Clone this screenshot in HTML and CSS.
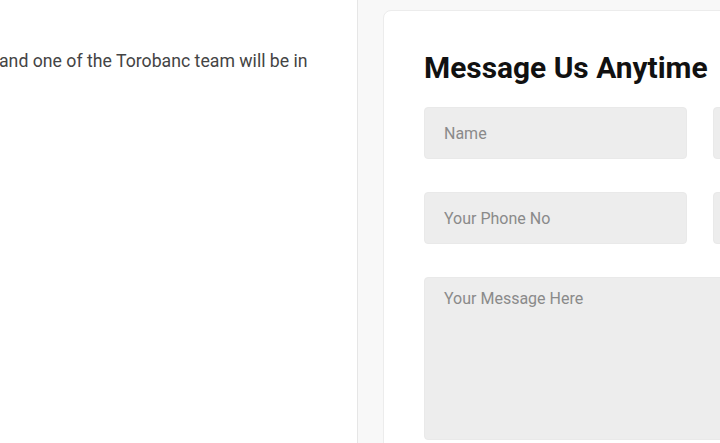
FILE: index.html
```html
<!DOCTYPE html>
<html>
<head>
<meta charset="utf-8">
<link rel="stylesheet" href="styles.css">
</head>
<body>
<div class="page">
  <div class="info">
    <p class="lead">and one of the Torobanc team will be in</p>
  </div>
  <div class="side">
    <div class="card">
      <h2 class="title">Message Us Anytime</h2>
      <form class="form">
        <div class="row">
          <input class="field" type="text" placeholder="Name">
          <input class="field" type="text" placeholder="Email">
        </div>
        <div class="row">
          <input class="field" type="text" placeholder="Your Phone No">
          <input class="field" type="text" placeholder="Subject">
        </div>
        <textarea class="field area" placeholder="Your Message Here"></textarea>
      </form>
    </div>
  </div>
</div>
</body>
</html>
```

FILE: styles.css
```css
html, body {
  margin: 0;
  padding: 0;
  background: #fff;
  overflow: hidden;
}
body {
  font-family: Roboto, "Liberation Sans", sans-serif;
  width: 720px;
  height: 443px;
}
.page {
  display: flex;
  height: 443px;
  overflow: hidden;
}
.info {
  width: 358px;
  flex: none;
  border-right: 1px solid #e6e6e6;
  box-sizing: border-box;
  overflow: hidden;
}
.lead {
  margin: 47px 0 0 -1px;
  font-size: 17.7px;
  line-height: 28px;
  color: #444;
  white-space: nowrap;
}
.side {
  flex: 1;
  min-width: 0;
  background: #f8f8f8;
  padding: 10px 0 0 25px;
  box-sizing: border-box;
  overflow: hidden;
}
.card {
  width: 600px;
  background: #fff;
  border: 1px solid #ececec;
  border-radius: 8px;
  padding: 39px 40px 0 40px;
  height: 600px;
  box-sizing: border-box;
}
.title {
  margin: 0 0 21px 0;
  font-size: 29.9px;
  line-height: 36px;
  font-weight: 700;
  color: #111;
  white-space: nowrap;
}
.form {
  display: flex;
  flex-direction: column;
  gap: 33px;
}
.row {
  display: flex;
  gap: 26px;
}
.field {
  width: 263px;
  height: 52px;
  box-sizing: border-box;
  background: #ededed;
  border: 1px solid #e9e9e9;
  border-radius: 4px;
  padding: 0 19px;
  font-family: Roboto, "Liberation Sans", sans-serif;
  font-size: 16px;
  color: #333;
  flex: none;
  outline: none;
}
.field::placeholder {
  color: #8a8a8a;
}
.area {
  width: 552px;
  height: 163px;
  padding: 11px 19px;
  resize: none;
}
```
